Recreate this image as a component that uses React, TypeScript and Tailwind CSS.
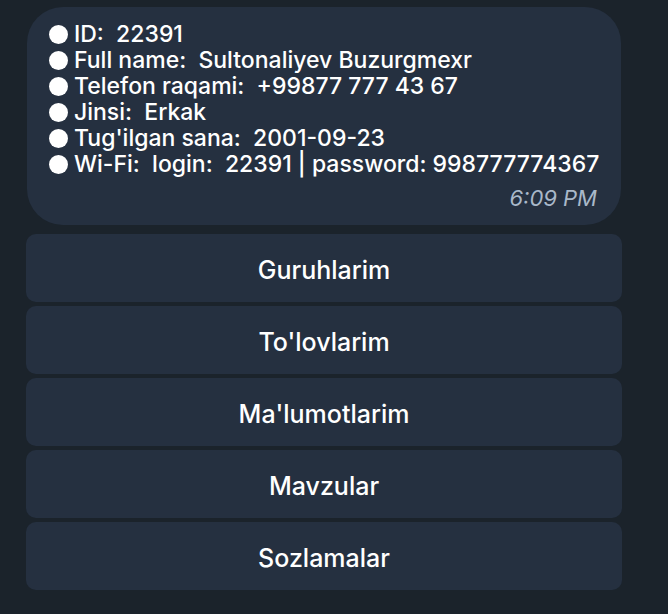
const rows = [
  ['ID:', '22391'],
  ['Full name:', 'Sultonaliyev Buzurgmexr'],
  ['Telefon raqami:', '+99877 777 43 67'],
  ['Jinsi:', 'Erkak'],
  ["Tug'ilgan sana:", '2001-09-23'],
  ['Wi-Fi:', 'login:\u00a0 22391 | password: 998777774367'],
];

const actions = ['Guruhlarim', "To'lovlarim", "Ma'lumotlarim", 'Mavzular', 'Sozlamalar'];

export default function App() {
  return (
    <main className="min-h-screen bg-[#1b232b] pt-[7px] pr-[46px] pb-6 pl-[26px] font-[Inter,'Liberation_Sans',sans-serif] text-white">
      <section className="mx-px mb-[9px] rounded-[36px] bg-[#253040] pt-[14px] pr-6 pb-[14px] pl-[22px]">
        <ul className="text-[23px] leading-[26px] font-medium">
          {rows.map(([label, value]) => (
            <li key={label} className="flex items-center gap-[6px] whitespace-pre">
              <span className="size-[19px] shrink-0 rounded-full bg-white" />
              <span>{label}{'\u00a0 '}{value}</span>
            </li>
          ))}
        </ul>
        <time className="mt-2 block text-right text-[22px] leading-[26px] text-[#a9b8c9] italic">6:09 PM</time>
      </section>
      <div className="flex flex-col gap-1">
        {actions.map((action) => (
          <button key={action} type="button" className="h-[68px] rounded-[10px] bg-[#253040] pt-[3px] text-[25px] leading-8 font-medium">
            {action}
          </button>
        ))}
      </div>
    </main>
  );
}
